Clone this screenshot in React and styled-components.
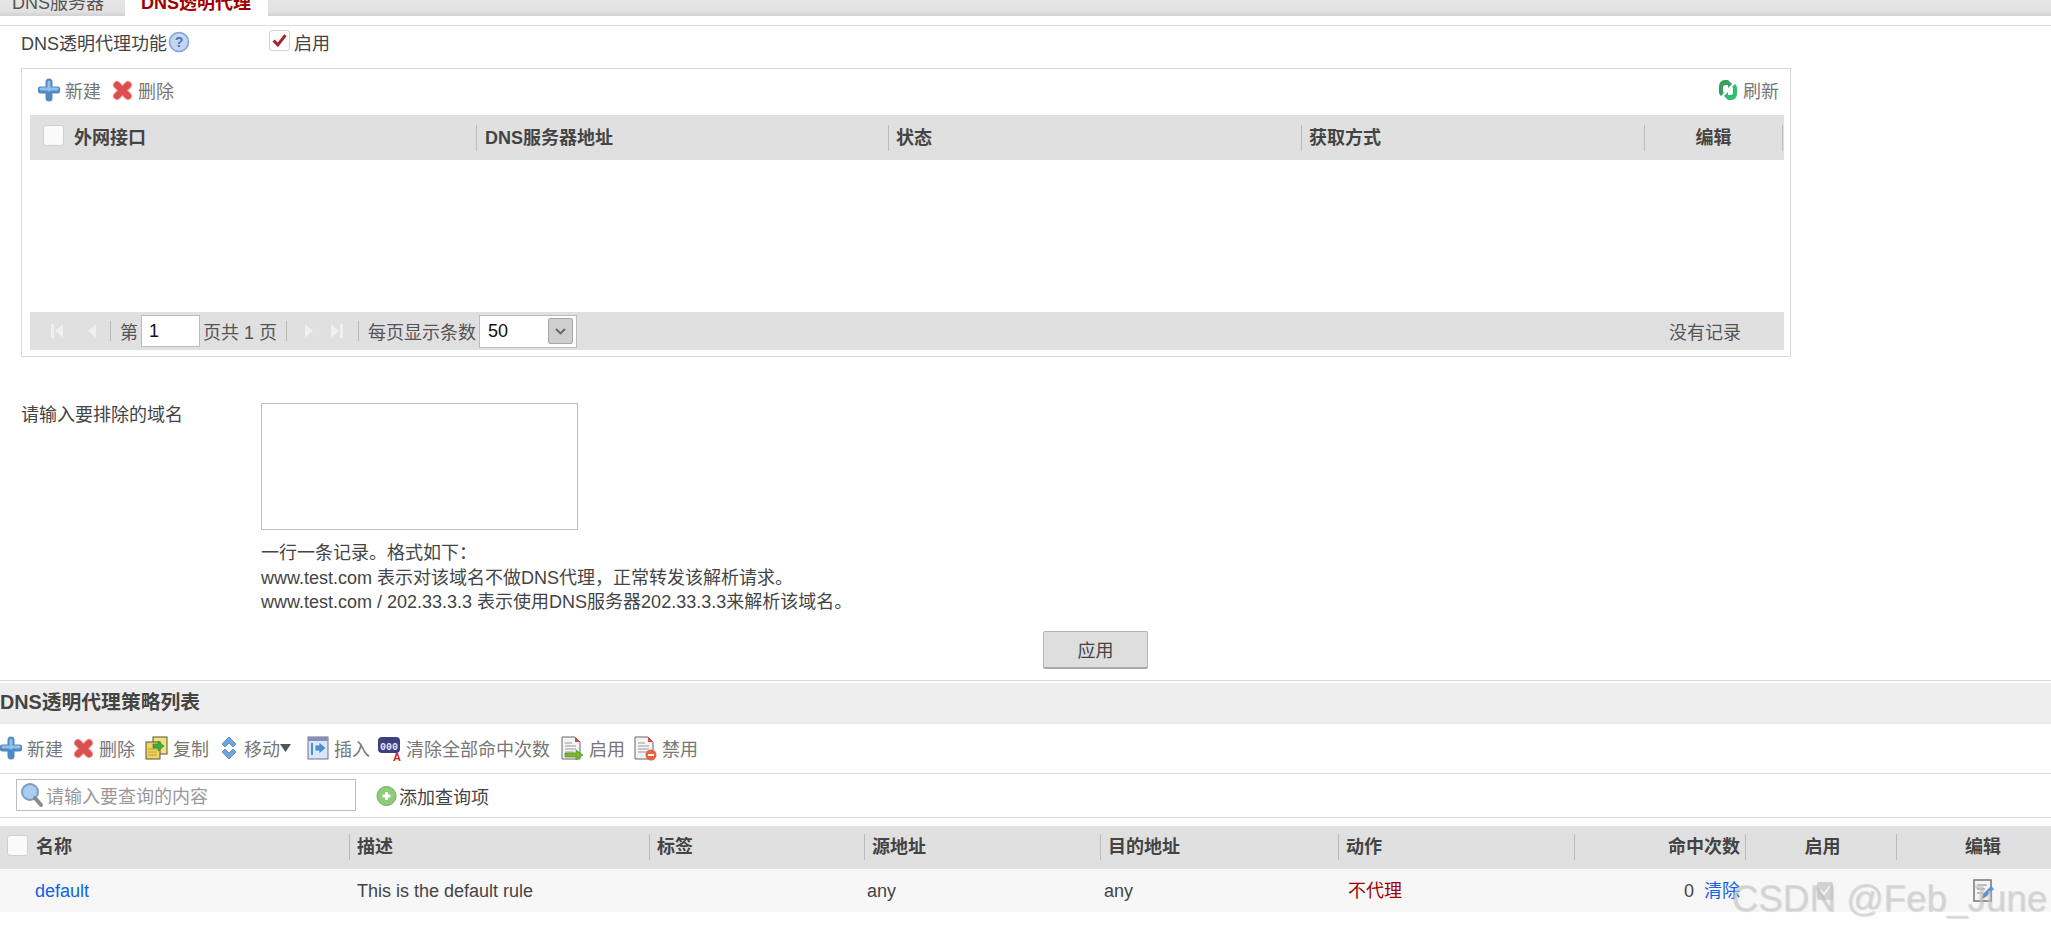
import React from "react";
import styled, { createGlobalStyle } from "styled-components";

const Global = createGlobalStyle`
  html, body { margin: 0; padding: 0; background: #fff; }
  body {
    font-family: "Liberation Sans", "Noto Sans CJK SC", sans-serif;
    font-size: 18px;
    color: #444;
  }
`;

const Page = styled.div`
  position: relative;
  width: 2051px;
  height: 935px;
  overflow: hidden;
`;

/* ---------- tabs ---------- */
const TabBar = styled.div`
  height: 16px;
  display: flex;
  background: linear-gradient(#e6e6e6, #e2e2e2 70%, #d2d2d2);
  overflow: hidden;
`;
const Tab = styled.div`
  width: ${(p) => p.$w}px;
  margin-left: ${(p) => p.$ml || 0}px;
  padding-left: ${(p) => p.$pl || 0}px;
  box-sizing: border-box;
  line-height: 6px;
  height: 16px;
  background: ${(p) => (p.$active ? "#fff" : "transparent")};
  color: ${(p) => (p.$active ? "#a00000" : "#555")};
  font-weight: ${(p) => (p.$active ? "bold" : "normal")};
  white-space: nowrap;
`;
const TabGap = styled.div`
  height: 9px;
  border-bottom: 1px solid #dcdcdc;
`;

/* ---------- transparent proxy form ---------- */
const SwitchRow = styled.div`
  display: flex;
  align-items: center;
  height: 42px;
  box-sizing: border-box;
  padding: 0 0 10px 21px;
`;
const SwitchLabel = styled.div`
  width: 248px;
  display: flex;
  align-items: center;
  gap: 1px;
`;
const CheckWrap = styled.label`
  display: flex;
  align-items: center;
  gap: 4px;
`;
const Box = styled.span`
  width: 21px;
  height: 21px;
  box-sizing: border-box;
  border: 1px solid #d0d0d0;
  border-radius: 3px;
  background: ${(p) => (p.$dim ? "#fafafa" : "#fff")};
  display: inline-flex;
  align-items: center;
  justify-content: center;
  flex: none;
  position: relative;
  top: -2px;
`;

const Panel = styled.div`
  margin-left: 21px;
  width: 1770px;
  height: 289px;
  box-sizing: border-box;
  border: 1px solid #d8d8d8;
  padding: 0 6px 6px 8px;
  display: flex;
  flex-direction: column;
`;
const PanelTools = styled.div`
  height: 46px;
  box-sizing: border-box;
  display: flex;
  align-items: center;
  justify-content: space-between;
  padding: 0 5px 4px 8px;
`;
const ToolGroup = styled.div`
  display: flex;
  align-items: center;
  gap: 11px;
`;
const Tool = styled.span`
  display: inline-flex;
  align-items: center;
  gap: 5px;
  margin-right: ${(p) => p.$mr || 0}px;
  color: #777;
  font-size: 18px;
  white-space: nowrap;
`;
const HeadRow = styled.div`
  display: grid;
  grid-template-columns: ${(p) => p.$cols};
  height: ${(p) => p.$h}px;
  align-items: center;
  background: #e0e0e0;
  font-weight: bold;
  font-size: 18px;
  color: #444;
`;
const HeadCell = styled.div`
  height: 26px;
  line-height: 26px;
  box-sizing: border-box;
  display: flex;
  align-items: center;
  gap: ${(p) => p.$gap ?? 10}px;
  padding: 0 ${(p) => (p.$align === "right" ? 5 : 7)}px 0 ${(p) => p.$pl ?? 7}px;
  justify-content: ${(p) =>
    p.$align === "center" ? "center" : p.$align === "right" ? "flex-end" : "flex-start"};
  border-right: ${(p) => (p.$noline ? "none" : "1px solid #bcbcbc")};
  white-space: nowrap;
`;
const PanelBody = styled.div`
  flex: 1;
`;
const Pager = styled.div`
  height: 38px;
  background: #e0e0e0;
  display: flex;
  align-items: center;
  padding-left: 20px;
  color: #555;
  font-size: 18px;
  white-space: nowrap;
`;
const PagerSep = styled.span`
  width: 1px;
  height: 20px;
  background: #b8b8b8;
  margin: 0 ${(p) => p.$r ?? 9}px 0 ${(p) => p.$l ?? 9}px;
`;
const PagerSpace = styled.span`
  width: ${(p) => p.$w}px;
`;
const PageInput = styled.span`
  width: 59px;
  height: 32px;
  box-sizing: border-box;
  background: #fff;
  border: 1px solid #bdbdbd;
  margin: 0 3px;
  padding-left: 7px;
  line-height: 30px;
  color: #111;
`;
const SizeSelect = styled.span`
  width: 98px;
  height: 33px;
  box-sizing: border-box;
  background: #fff;
  border: 1px solid #bdbdbd;
  margin-left: 3px;
  padding: 0 3px 0 8px;
  display: flex;
  align-items: center;
  justify-content: space-between;
  color: #111;
`;
const SelectBtn = styled.span`
  width: 25px;
  height: 26px;
  box-sizing: border-box;
  background: #cfcfcf;
  border: 1px solid #a8a8a8;
  border-radius: 2px;
  display: flex;
  align-items: center;
  justify-content: center;
`;
const PagerInfo = styled.span`
  margin-left: auto;
  margin-right: 43px;
`;

const ExcludeRow = styled.div`
  display: flex;
  margin-top: 46px;
  padding-left: 21px;
`;
const ExcludeLabel = styled.div`
  width: 240px;
  line-height: 24px;
`;
const ExcludeBody = styled.div`
  display: flex;
  flex-direction: column;
`;
const TextArea = styled.div`
  width: 317px;
  height: 127px;
  box-sizing: border-box;
  border: 1px solid #bdbdbd;
`;
const Help = styled.div`
  margin-top: 11px;
  line-height: 24.5px;
  color: #444;
  white-space: nowrap;
`;
const ApplyRow = styled.div`
  display: flex;
  justify-content: center;
  padding-left: 140px;
  margin-top: 16px;
  height: 49px;
  border-bottom: 1px solid #d8d8d8;
`;
const ApplyBtn = styled.button`
  width: 105px;
  height: 38px;
  box-sizing: border-box;
  background: #dedede;
  border: 1px solid #b4b4b4;
  border-bottom: 2px solid #a8a8a8;
  border-radius: 2px;
  font: inherit;
  color: #444;
  padding: 0;
`;

/* ---------- policy list ---------- */
const SectionTitle = styled.div`
  margin-top: 2px;
  height: 41px;
  box-sizing: border-box;
  line-height: 38px;
  background: #eeeeee;
  border-bottom: 2px solid #e8e8e8;
  font-weight: bold;
  color: #444;
  font-size: 19.8px;
  white-space: nowrap;
`;
const ListTools = styled.div`
  height: 49px;
  display: flex;
  align-items: center;
  gap: 10px;
  border-bottom: 1px solid #dcdcdc;
`;
const SearchRow = styled.div`
  height: 43px;
  display: flex;
  align-items: center;
  padding-left: 16px;
  border-bottom: 1px solid #dcdcdc;
`;
const SearchBox = styled.div`
  width: 340px;
  height: 32px;
  box-sizing: border-box;
  border: 1px solid #bdbdbd;
  display: flex;
  align-items: center;
  gap: 2px;
  padding-left: 3px;
  color: #999;
`;
const AddQuery = styled.span`
  margin-left: 20px;
  display: inline-flex;
  align-items: center;
  gap: 2px;
  color: #444;
  position: relative;
  top: 1px;
`;
const ListHead = styled.div`
  margin-top: 8px;
`;
const DataRow = styled.div`
  display: grid;
  grid-template-columns: ${(p) => p.$cols};
  height: 42px;
  margin-top: 1px;
  align-items: center;
  background: #f7f7f7;
  font-size: 18px;
  line-height: 24px;
  color: #444;
`;
const DataCell = styled.div`
  display: flex;
  align-items: center;
  gap: 10px;
  height: 24px;
  padding-left: ${(p) => p.$pl ?? 7}px;
  padding-right: ${(p) => (p.$align === "right" ? 6 : 0)}px;
  justify-content: ${(p) =>
    p.$align === "center" ? "center" : p.$align === "right" ? "flex-end" : "flex-start"};
  color: ${(p) => p.$color || "inherit"};
  white-space: nowrap;
`;
const Link = styled.span`
  color: #0f62e6;
`;
const CaretWrap = styled.span`
  display: inline-flex;
  margin-left: -5px;
`;
const Watermark = styled.div`
  position: absolute;
  right: 4px;
  top: 877px;
  font-size: 36.8px;
  line-height: 44px;
  color: rgba(205, 205, 205, 0.6);
  text-shadow: 1px 1px 1px rgba(130, 130, 130, 0.25);
  white-space: nowrap;
`;

/* ---------- icons ---------- */
const Plus = () => (
  <svg width="22" height="24" viewBox="0 0 22 24">
    <path d="M11 4v16M3 12h16" stroke="#4f8ac2" strokeWidth="7" strokeLinecap="round" />
    <path d="M11 4v8M3 11h16" stroke="#93c0e6" strokeWidth="3" strokeLinecap="round" />
  </svg>
);
const Cross = () => (
  <svg width="21" height="22" viewBox="0 0 21 22">
    <path d="M5 6l11 11M16 6L5 17" stroke="#efb4b4" strokeWidth="8.5" strokeLinecap="round" />
    <path d="M5 6l11 11M16 6L5 17" stroke="#dc4f4f" strokeWidth="6.5" strokeLinecap="round" />
  </svg>
);
const Refresh = () => (
  <svg width="20" height="22" viewBox="0 0 20 22">
    <path d="M10 1H7C3 1 1 4 1 8v5c0 2 1 3 2 4l3-3c-1-1-1-1-1-2V8c0-1 1-2 3-2h2v3l4-4-4-4z" fill="#3a9e5c" />
    <path d="M10 21h3c4 0 6-3 6-7V9c0-2-1-3-2-4l-3 3c1 1 1 1 1 2v4c0 1-1 2-3 2h-2v-3l-4 4 4 4z" fill="#2fc06d" />
  </svg>
);
const HelpIcon = () => (
  <svg width="22" height="22" viewBox="0 0 22 22">
    <circle cx="11" cy="11" r="9.5" fill="#c5d7ef" stroke="#7fa3d8" strokeWidth="1.6" />
    <text x="11" y="16" textAnchor="middle" fontSize="14" fontWeight="bold" fill="#4a74b4" fontFamily="Liberation Sans">?</text>
  </svg>
);
const RedCheck = () => (
  <svg width="17" height="14" viewBox="0 0 15 13">
    <path d="M2 7l4 4 7-9" fill="none" stroke="#a5202a" strokeWidth="2.8" />
  </svg>
);
const PagerArrow = ({ dir, end }) => (
  <svg width="16" height="18" viewBox="0 0 16 18">
    <g transform={dir === "left" ? "" : "translate(16 0) scale(-1 1)"}>
      {end && <rect x="1" y="2" width="3" height="14" fill="#f0f0f0" />}
      <path d="M13 2v14L5 9z" fill="#f0f0f0" />
    </g>
  </svg>
);
const ChevronDown = () => (
  <svg width="13" height="9" viewBox="0 0 13 9">
    <path d="M2 2l4.5 4.5L11 2" fill="none" stroke="#666" strokeWidth="1.8" />
  </svg>
);
const Copy = () => (
  <svg width="23" height="24" viewBox="0 0 23 24">
    <rect x="8" y="1" width="14" height="17" fill="#f3e27c" stroke="#55553c" />
    <rect x="1" y="6" width="14" height="17" fill="#f0d560" stroke="#55553c" />
    <path d="M3 13h9M3 16h9M3 19h9" stroke="#b89c30" />
    <path d="M8 8h5V5l6 5-6 5v-3H8z" fill="#3fae3f" stroke="#2c7d2c" strokeWidth=".6" />
  </svg>
);
const MoveIcon = () => (
  <svg width="20" height="24" viewBox="0 0 18 24">
    <path d="M9 1l7 7-3 3-4-4-4 4-3-3z" fill="#6fa4dc" stroke="#4d83bd" strokeWidth=".8" />
    <path d="M9 23l-7-7 3-3 4 4 4-4 3 3z" fill="#6fa4dc" stroke="#4d83bd" strokeWidth=".8" />
  </svg>
);
const InsertIcon = () => (
  <svg width="22" height="24" viewBox="0 0 22 24">
    <rect x="1" y="1" width="20" height="22" fill="#d8e6f5" stroke="#6d6f9a" />
    <rect x="1" y="1" width="20" height="4" fill="#8a8db5" />
    <path d="M8 9h4V6l7 6-7 6v-3H8z" fill="#4a8fd0" stroke="#fff" strokeWidth=".6" />
    <path d="M5 7v12" stroke="#4a8fd0" strokeWidth="2" />
  </svg>
);
const ClearIcon = () => (
  <svg width="24" height="27" viewBox="0 0 24 27">
    <rect x="1" y="2" width="22" height="16" rx="4" fill="#3f3f80" />
    <text x="12" y="14.5" textAnchor="middle" fontSize="10" fontWeight="bold" fill="#e4e4f0" fontFamily="Liberation Mono">000</text>
    <text x="20" y="26" textAnchor="middle" fontSize="11" fontWeight="bold" fill="#d0202a" fontFamily="Liberation Sans">A</text>
  </svg>
);
const Doc = ({ children }) => (
  <svg width="24" height="25" viewBox="0 0 24 25">
    <path d="M2 1h13l5 5v17H2z" fill="#f4f4f4" stroke="#666" />
    <path d="M15 1l5 5h-5z" fill="#e04848" />
    <path d="M5 7h7M5 10h11M5 13h11M5 16h9" stroke="#9a9a9a" />
    {children}
  </svg>
);
const EnableIcon = () => (
  <Doc>
    <path d="M5 17h11v-3l7 5-7 5v-3H5z" fill="#79b82e" stroke="#4d7f16" strokeWidth=".6" />
  </Doc>
);
const DisableIcon = () => (
  <Doc>
    <circle cx="18" cy="19" r="5.5" fill="#e8623f" />
    <rect x="15" y="18" width="6" height="2" fill="#fff" />
  </Doc>
);
const Caret = () => (
  <svg width="11" height="8" viewBox="0 0 11 8">
    <path d="M0 0h11L5.5 8z" fill="#555" />
  </svg>
);
const Magnifier = () => (
  <svg width="24" height="26" viewBox="0 0 24 26">
    <circle cx="10" cy="10" r="8" fill="#a9cdf0" stroke="#7d9cc0" strokeWidth="2" />
    <path d="M15 16l6 7" stroke="#8a8a8a" strokeWidth="4" strokeLinecap="round" />
  </svg>
);
const AddCircle = () => (
  <svg width="21" height="22" viewBox="0 0 21 22">
    <circle cx="10.5" cy="11" r="9.5" fill="#8fcb7a" stroke="#6fae5c" />
    <path d="M9 7h3v2.500h2.500v3H12V15H9v-2.500H6.500v-3H9z" fill="#fff" />
  </svg>
);
const DimCheck = () => (
  <svg width="18" height="20" viewBox="0 0 18 20">
    <rect x="1" y="1" width="16" height="18" rx="2" fill="#d2d2d2" />
    <path d="M4 9l4 4 6-8" fill="none" stroke="#f2f2f2" strokeWidth="2" />
  </svg>
);
const EditIcon = () => (
  <svg width="24" height="24" viewBox="0 0 24 24">
    <rect x="2" y="1" width="17" height="21" fill="#f4f4f4" stroke="#777" strokeWidth="1.500" />
    <path d="M5 6h10M5 10h8M5 14h6" stroke="#888" />
    <path d="M9 20l2-5 8-8 3 3-8 8z" fill="#5d94d0" />
  </svg>
);

const topCols = "447px 412px 413px 343px 138px";
const listCols = "350px 300px 215px 236px 238px 236px 171px 151px 154px";

const listHeads = [
  { text: "描述" },
  { text: "标签" },
  { text: "源地址" },
  { text: "目的地址" },
  { text: "动作" },
  { text: "命中次数", align: "right" },
  { text: "启用", align: "center", pl: 10 },
  { text: "编辑", align: "center", noline: true, pl: 25 },
];

export default function App() {
  return (
    <Page>
      <Global />
      <TabBar>
        <Tab $w={119} $pl={12}>DNS服务器</Tab>
        <Tab $w={143} $ml={6} $pl={16} $active>DNS透明代理</Tab>
      </TabBar>
      <TabGap />

      <SwitchRow>
        <SwitchLabel>
          DNS透明代理功能
          <HelpIcon />
        </SwitchLabel>
        <CheckWrap>
          <Box><RedCheck /></Box>
          启用
        </CheckWrap>
      </SwitchRow>

      <Panel>
        <PanelTools>
          <ToolGroup>
            <Tool><Plus />新建</Tool>
            <Tool><Cross />删除</Tool>
          </ToolGroup>
          <Tool><Refresh />刷新</Tool>
        </PanelTools>
        <HeadRow $cols={topCols} $h={45}>
          <HeadCell $pl={13}><Box $dim />外网接口</HeadCell>
          <HeadCell $pl={8}>DNS服务器地址</HeadCell>
          <HeadCell>状态</HeadCell>
          <HeadCell>获取方式</HeadCell>
          <HeadCell $align="center">编辑</HeadCell>
        </HeadRow>
        <PanelBody />
        <Pager>
          <PagerArrow dir="left" end />
          <PagerSpace $w={17} />
          <PagerArrow dir="left" />
          <PagerSep $l={11} />
          第
          <PageInput>1</PageInput>
          页共 1 页
          <PagerSep $r={0} />
          <PagerSpace $w={15} />
          <PagerArrow dir="right" />
          <PagerSpace $w={10} />
          <PagerArrow dir="right" end />
          <PagerSep $l={14} />
          每页显示条数
          <SizeSelect>
            50
            <SelectBtn><ChevronDown /></SelectBtn>
          </SizeSelect>
          <PagerInfo>没有记录</PagerInfo>
        </Pager>
      </Panel>

      <ExcludeRow>
        <ExcludeLabel>请输入要排除的域名</ExcludeLabel>
        <ExcludeBody>
          <TextArea />
          <Help>
            {"一行一条记录。格式如下\uFF1A"}
            <br />
            {"www.test.com 表示对该域名不做DNS代理\uFF0C正常转发该解析请求。"}
            <br />
            www.test.com / 202.33.3.3 表示使用DNS服务器202.33.3.3来解析该域名。
          </Help>
        </ExcludeBody>
      </ExcludeRow>

      <ApplyRow>
        <ApplyBtn>应用</ApplyBtn>
      </ApplyRow>

      <SectionTitle>DNS透明代理策略列表</SectionTitle>
      <ListTools>
        <Tool><Plus />新建</Tool>
        <Tool><Cross />删除</Tool>
        <Tool><Copy />复制</Tool>
        <Tool $mr={6}><MoveIcon />移动<CaretWrap><Caret /></CaretWrap></Tool>
        <Tool $mr={-3}><InsertIcon />插入</Tool>
        <Tool><ClearIcon />清除全部命中次数</Tool>
        <Tool $mr={-2}><EnableIcon />启用</Tool>
        <Tool><DisableIcon />禁用</Tool>
      </ListTools>
      <SearchRow>
        <SearchBox><Magnifier />请输入要查询的内容</SearchBox>
        <AddQuery><AddCircle />添加查询项</AddQuery>
      </SearchRow>

      <ListHead>
        <HeadRow $cols={listCols} $h={43}>
          <HeadCell $pl={7} $gap={8}><Box $dim />名称</HeadCell>
          {listHeads.map((h) => (
            <HeadCell key={h.text} $align={h.align} $noline={h.noline} $pl={h.pl}>{h.text}</HeadCell>
          ))}
        </HeadRow>
      </ListHead>
      <DataRow $cols={listCols}>
        <DataCell $pl={35}><Link>default</Link></DataCell>
        <DataCell>This is the default rule</DataCell>
        <DataCell />
        <DataCell $pl={2}>any</DataCell>
        <DataCell $pl={3}>any</DataCell>
        <DataCell $pl={9} $color="#a00000">不代理</DataCell>
        <DataCell $align="right">0 <Link>清除</Link></DataCell>
        <DataCell $align="center"><DimCheck /></DataCell>
        <DataCell $align="center" $pl={20}><EditIcon /></DataCell>
      </DataRow>

      <Watermark>CSDN @Feb_June</Watermark>
    </Page>
  );
}
